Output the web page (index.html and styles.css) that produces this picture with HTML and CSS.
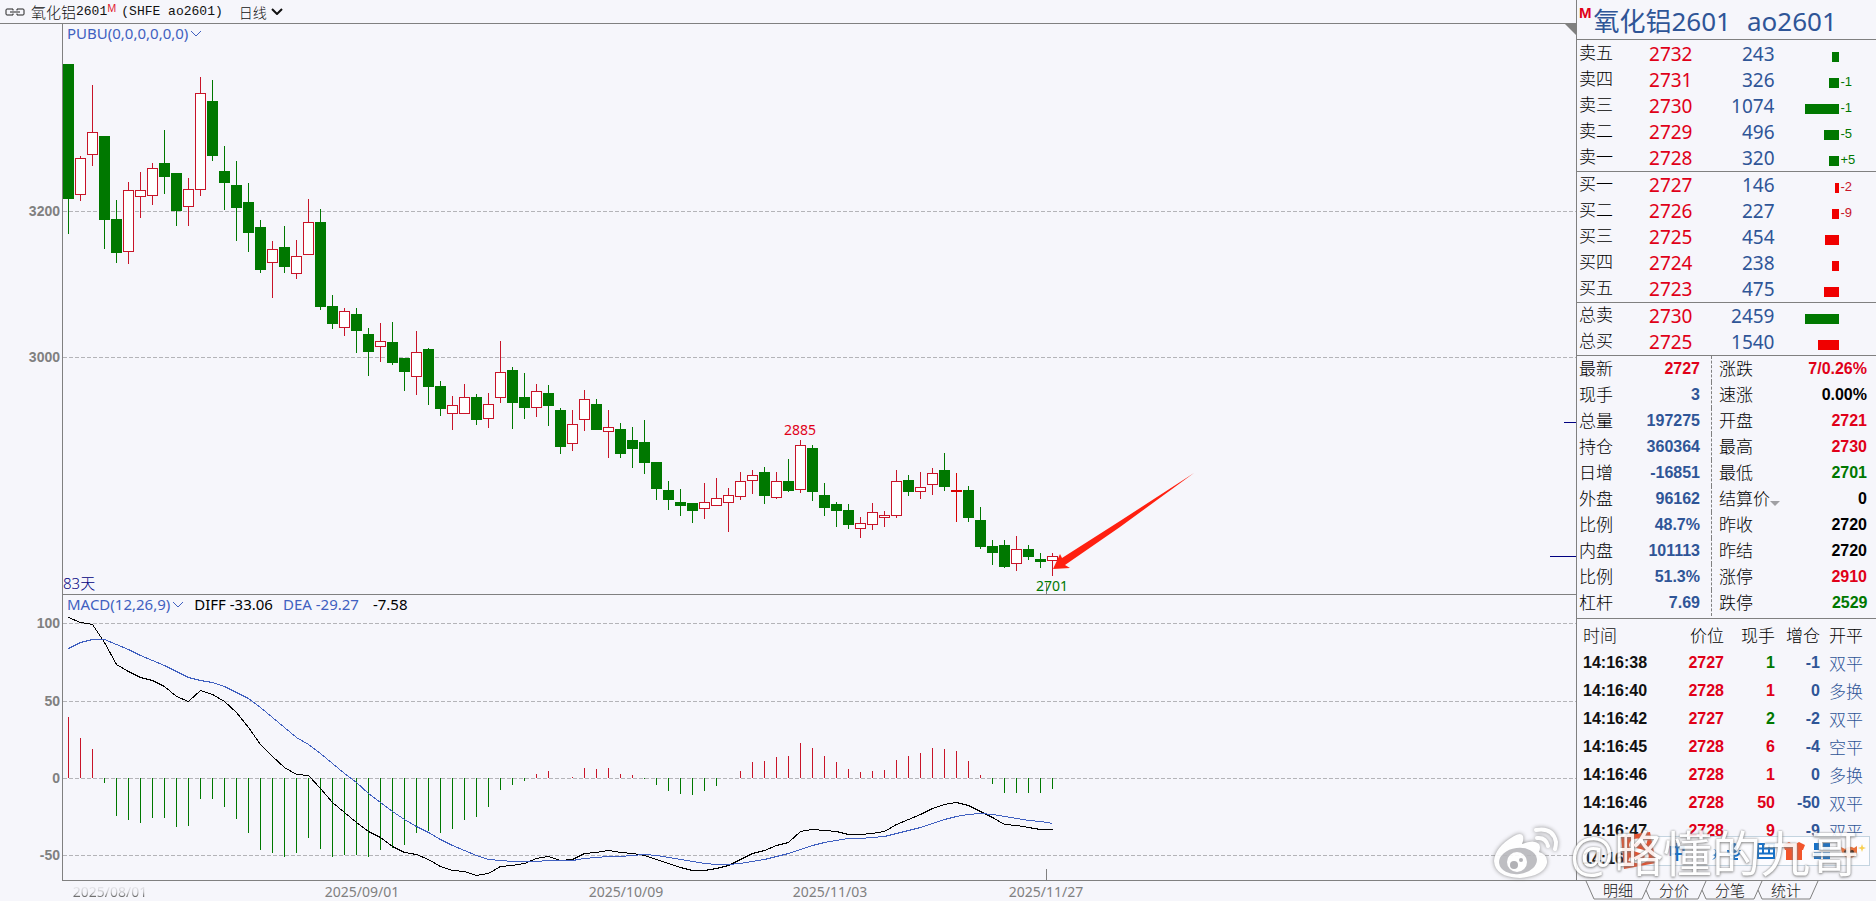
FILE: index.html
```html
<!DOCTYPE html>
<html lang="zh-CN">
<head>
    <meta charset="UTF-8">
    <meta name="viewport" content="width=device-width, initial-scale=1.0">
    <title>氧化铝2601 (SHFE ao2601)</title>
    <link rel="stylesheet" href="styles.css">
</head>
<body>

    <main class="chart-area">
        <!-- Title bar -->
        <header class="chart-header">
            <svg class="link-icon" width="20" height="8" viewBox="0 0 20 8">
                <path d="M8 1H2Q1 1 1 2V6Q1 7 2 7H8V5.500M8 2.500V1M12 2.500V1H18Q19 1 19 2V6Q19 7 18 7H12V5.500M5 4H15" />
            </svg>
            <h1 class="symbol">氧化铝<span class="mono">2601</span><sup>M</sup><span class="mono code">(SHFE ao2601)</span></h1>
            <button class="period" type="button">日线
                <svg class="chevron" width="12" height="7" viewBox="0 0 12 7"><path d="M1 1L6 6L11 1" /></svg>
            </button>
            <span class="corner"></span>
        </header>

        <!-- Candles -->
        <section class="pane price-pane">
            <div class="scale" id="priceScale"></div>
            <div class="plot">
                <svg class="canvas" id="priceChart" viewBox="63 24 1513 570" preserveAspectRatio="none"></svg>
                <div class="legend">
                    <button class="indicator" type="button">PUBU(0,0,0,0,0,0)<svg class="chevron" width="12" height="7" viewBox="0 0 12 7"><path d="M1 1L6 6L11 1" /></svg></button>
                </div>
                <div id="priceTags"></div>
                <span class="days">83天</span>
            </div>
        </section>

        <!-- MACD -->
        <section class="pane macd-pane">
            <div class="scale" id="macdScale"></div>
            <div class="plot">
                <svg class="canvas" id="macdChart" viewBox="63 595 1513 285" preserveAspectRatio="none"></svg>
                <div class="legend">
                    <button class="indicator" type="button">MACD(12,26,9)<svg class="chevron" width="12" height="7" viewBox="0 0 12 7"><path d="M1 1L6 6L11 1" /></svg></button>
                    <span class="diff">DIFF -33.06</span>
                    <span class="dea">DEA -29.27</span>
                    <span class="macd-value">-7.58</span>
                </div>
            </div>
        </section>

        <div class="date-axis" id="dateAxis"></div>
    </main>

    <aside class="quote">
        <h2 class="quote-title"><sup>M</sup><span>氧化铝2601</span><span>ao2601</span></h2>

        <!-- Order book -->
        <table class="book">
            <colgroup><col class="c-name"><col class="c-price"><col class="c-vol"><col class="c-bar"><col></colgroup>
            <tbody id="asks"></tbody>
            <tbody id="bids"></tbody>
            <tbody id="totals"></tbody>
        </table>

        <!-- Statistics -->
        <div class="stats">
            <table class="stat-table">
                <tr><th>最新</th><td class="red">2727</td></tr>
                <tr><th>现手</th><td>3</td></tr>
                <tr><th>总量</th><td>197275</td></tr>
                <tr><th>持仓</th><td>360364</td></tr>
                <tr><th>日增</th><td>-16851</td></tr>
                <tr><th>外盘</th><td>96162</td></tr>
                <tr><th>比例</th><td>48.7%</td></tr>
                <tr><th>内盘</th><td>101113</td></tr>
                <tr><th>比例</th><td>51.3%</td></tr>
                <tr><th>杠杆</th><td>7.69</td></tr>
            </table>
            <table class="stat-table right">
                <tr><th>涨跌</th><td class="red">7/0.26%</td></tr>
                <tr><th>速涨</th><td>0.00%</td></tr>
                <tr><th>开盘</th><td class="red">2721</td></tr>
                <tr><th>最高</th><td class="red">2730</td></tr>
                <tr><th>最低</th><td class="green">2701</td></tr>
                <tr><th><button class="settle" type="button">结算价<span class="caret"></span></button></th><td>0</td></tr>
                <tr><th>昨收</th><td>2720</td></tr>
                <tr><th>昨结</th><td>2720</td></tr>
                <tr><th>涨停</th><td class="red">2910</td></tr>
                <tr><th>跌停</th><td class="green">2529</td></tr>
            </table>
        </div>

        <!-- Trades -->
        <div class="ticks">
            <table class="tick-table">
                <colgroup><col class="t-time"><col class="t-price"><col class="t-qty"><col class="t-inc"><col></colgroup>
                <thead>
                    <tr><th>时间</th><th>价位</th><th>现手</th><th>增仓</th><th>开平</th></tr>
                </thead>
                <tbody>
                    <tr><td>14:16:38</td><td>2727</td><td class="green">1</td><td>-1</td><td>双平</td></tr>
                    <tr><td>14:16:40</td><td>2728</td><td class="red">1</td><td>0</td><td>多换</td></tr>
                    <tr><td>14:16:42</td><td>2727</td><td class="green">2</td><td>-2</td><td>双平</td></tr>
                    <tr><td>14:16:45</td><td>2728</td><td class="red">6</td><td>-4</td><td>空平</td></tr>
                    <tr><td>14:16:46</td><td>2728</td><td class="red">1</td><td>0</td><td>多换</td></tr>
                    <tr><td>14:16:46</td><td>2728</td><td class="red">50</td><td>-50</td><td>双平</td></tr>
                    <tr><td>14:16:47</td><td>2728</td><td class="red">9</td><td>-9</td><td>双平</td></tr>
                    <tr><td>14:16</td><td></td><td></td><td></td><td></td></tr>
                </tbody>
            </table>
        </div>

        <nav class="tabs">
            <button type="button"><svg width="65" height="19" viewBox="0 0 65 19"><path d="M0 0L8 18H56L64 0" /></svg>明细</button>
            <button type="button"><svg width="65" height="19" viewBox="0 0 65 19"><path d="M4 9L8 18H56L64 0" /></svg>分价</button>
            <button type="button"><svg width="65" height="19" viewBox="0 0 65 19"><path d="M4 9L8 18H56L64 0" /></svg>分笔</button>
            <button type="button"><svg width="65" height="19" viewBox="0 0 65 19"><path d="M4 9L8 18H56L64 0" /></svg>统计</button>
        </nav>
    </aside>

    <!-- Input method bar -->
    <div class="ime">
        <svg class="ime-logo" width="40" height="40" viewBox="0 0 40 40">
            <path d="M3 5L32 1L38 32L6 38Z" fill="#e8502c" />
            <path d="M29 11Q14 7 13 14Q13 18 22 20Q31 22 28 28Q23 33 11 28" fill="none" stroke="#fff" stroke-width="4" />
        </svg>
        <span class="ime-lang">中</span>
        <svg width="10" height="20" viewBox="0 0 10 20"><path d="M5 8a3 3 0 1 1-1 6q3 0 3 2l-3 3q6-2 5-8q-1-3-4-3z" fill="#1570c8" /></svg>
        <svg class="ime-mic" width="16" height="20" viewBox="0 0 16 20"><rect x="5" y="2" width="6" height="10" rx="3" fill="#1570c8" /><path d="M2 9q0 6 6 6t6-6M8 15v3M4 18h8" fill="none" stroke="#1570c8" stroke-width="2" /></svg>
        <svg width="18" height="16" viewBox="0 0 18 16"><rect x="1" y="1" width="16" height="14" fill="#fff" stroke="#1570c8" stroke-width="2" /><path d="M1 5.500H17M1 10.500H17M6 1V11M12 1V11" stroke="#1570c8" stroke-width="2" /></svg>
        <svg width="22" height="20" viewBox="0 0 22 20"><path d="M6 1Q11 5 16 1L22 4L20 9H19V19H3V9H2L0 4Z" fill="#f2552c" /></svg>
        <svg width="18" height="18" viewBox="0 0 18 18"><path d="M1 1h7v7h-7zM10 1h7v7h-7zM1 10h7v7h-7zM10 10h7v7h-7z" fill="#1570c8" /></svg>
        <svg width="28" height="20" viewBox="0 0 28 20"><path d="M2 6L6 8Q10 4 15 7L18 5V12Q15 18 9 17Q2 15 2 6Z" fill="#e8703a" /><circle cx="7" cy="11" r="2" fill="#40281c" /><circle cx="13" cy="11" r="2" fill="#40281c" /><path d="M23 3l1 3 3 1-3 1-1 3-1-3-3-1 3-1z" fill="#f8cf52" /></svg>
    </div>

    <!-- Watermark -->
    <div class="watermark">
        <svg width="70" height="56" viewBox="0 0 70 56">
            <path d="M24 11Q31 7 33 11Q34 15 32 19Q44 14 49 19Q51 22 49 27Q58 30 57 38Q54 51 30 53Q5 52 4 36Q5 22 24 11Z" fill="#fff" />
            <ellipse cx="28" cy="36" rx="19" ry="13" fill="#b8b8bc" transform="rotate(-7 28 36)" />
            <circle cx="27" cy="37" r="10" fill="#fff" />
            <circle cx="24" cy="40" r="4" fill="#aaaaae" />
            <circle cx="31" cy="35" r="2" fill="#aaaaae" />
            <path d="M46 5Q63 2 66 17Q66 21 65 24M47 13Q56 12 58 21" fill="none" stroke="#fff" stroke-width="4" stroke-linecap="round" />
        </svg>
        <span>@略懂的九哥</span>
    </div>

    <script src="chart.js"></script>
</body>
</html>
```
FILE: styles.css
```css
/* General Styles */
* {
    box-sizing: border-box;
}

body {
    margin: 0;
    height: 100vh;
    display: flex;
    overflow: hidden;
    position: relative;
    background-color: #f6f6fb;
    color: #111;
    font-family: "Noto Sans", "Noto Sans CJK SC", sans-serif;
    font-size: 15px;
}

h1, h2 {
    margin: 0;
    font-weight: 400;
}

button {
    padding: 0;
    border: none;
    background: none;
    color: inherit;
    font: inherit;
    cursor: pointer;
}

table {
    border-collapse: collapse;
    table-layout: fixed;
    width: 100%;
}

th, td {
    padding: 0;
    font-weight: 400;
    white-space: nowrap;
}

th {
    color: #000;
}

.chevron {
    fill: none;
    stroke: currentColor;
}

/* Chart area */
.chart-area {
    flex: 1;
    min-width: 0;
    display: flex;
    flex-direction: column;
}

.chart-header {
    position: relative;
    flex: none;
    display: flex;
    align-items: center;
    height: 24px;
    padding-left: 5px;
    border-bottom: 1px solid #808080;
}

.link-icon {
    fill: none;
    stroke: #222;
    margin-right: 6px;
}

.symbol {
    display: flex;
    align-items: center;
    font-size: 15px;
    font-weight: 300;
}

.symbol sup {
    align-self: flex-start;
    color: #e02030;
    font-size: 10px;
    font-weight: 400;
    line-height: 14px;
}

.mono {
    font-family: "Liberation Mono", monospace;
    font-size: 13px;
    font-weight: 400;
}

.code {
    margin-left: 5px;
}

.period {
    display: flex;
    align-items: center;
    gap: 4px;
    margin-left: 16px;
    font-size: 14px;
    font-weight: 300;
}

.period .chevron {
    stroke-width: 2;
}

.corner {
    position: absolute;
    right: 0;
    top: 23px;
    width: 12px;
    height: 12px;
    background-color: #808080;
    clip-path: polygon(0 0, 100% 0, 100% 100%);
}

.pane {
    display: flex;
    min-height: 0;
}

.price-pane {
    flex: 571;
}

.macd-pane {
    flex: 286;
}

.scale {
    position: relative;
    flex: none;
    width: 62px;
}

.scale span {
    position: absolute;
    right: 2px;
    color: #808080;
    font-family: "Liberation Sans", sans-serif;
    font-size: 14px;
    font-weight: 700;
    line-height: 16px;
    transform: translateY(-50%);
}

.plot {
    position: relative;
    flex: 1;
    border-left: 1px solid #808080;
    border-bottom: 1px solid #808080;
}

.canvas {
    position: absolute;
    left: 0;
    top: 0;
    width: 100%;
    height: 100%;
}

.legend {
    position: relative;
    display: flex;
    align-items: center;
    gap: 10px;
    height: 18px;
    padding-left: 4px;
    line-height: 18px;
}

.indicator {
    display: flex;
    align-items: center;
    gap: 2px;
}

.indicator, .dea {
    color: #4060c0;
}

.diff, .macd-value {
    color: #000;
}

.macd-value {
    margin-left: 4px;
}

.tag {
    position: absolute;
    font-size: 14px;
    line-height: 16px;
    transform: translate(-50%, -50%);
}

.days {
    position: absolute;
    left: 0;
    bottom: 2px;
    color: #000080;
    line-height: 18px;
    font-weight: 300;
}

.date-axis {
    position: relative;
    flex: none;
    height: 20px;
    margin-left: 63px;
    color: #808080;
    font-size: 14px;
    line-height: 22px;
}

.date-axis span {
    position: absolute;
    transform: translateX(-50%);
}

.date-axis .faded {
    color: transparent;
    background: linear-gradient(#f6f6fb 15%, #c8c8cc 50%, #707070 70%);
    background-clip: text;
}

/* Chart drawing */
.grid {
    stroke: #b4b4b8;
    stroke-dasharray: 4 2;
}

.up {
    stroke: #c81428;
    fill: #fff;
}

.down {
    stroke: #007800;
    fill: #007800;
}

.flat {
    stroke: #d80000;
    fill: #d80000;
}

.bar-up {
    stroke: #c81428;
}

.bar-down {
    stroke: #007800;
}

.line {
    fill: none;
}

.line-diff {
    stroke: #000;
}

.line-dea {
    stroke: #4060c0;
}

.mark {
    stroke: #000080;
}

.cursor {
    stroke: #808080;
}

.arrow {
    fill: #ff2010;
}

/* Quote panel */
.quote {
    flex: none;
    display: flex;
    flex-direction: column;
    width: 300px;
}

.red {
    color: #e00018;
}

.green {
    color: #007800;
}

.quote-title {
    display: flex;
    align-items: center;
    height: 40px;
    border-bottom: 1px solid #808080;
    border-left: 1px solid #808080;
    color: #2f5597;
    font-size: 26px;
    line-height: 30px;
    padding: 2px 0 0 2px;
}

.quote-title sup {
    align-self: flex-start;
    margin-right: 2px;
    padding-top: 2px;
    color: #e00018;
    font-family: "Liberation Sans", sans-serif;
    font-size: 15px;
    font-weight: 700;
    line-height: 18px;
}

.quote-title span + span {
    margin-left: 16px;
}

/* Order book */
.book {
    border-left: 1px solid #808080;
}

.c-name { width: 60px; }
.c-price { width: 56px; }
.c-vol { width: 82px; }
.c-bar { width: 64px; }

.book tbody {
    border-bottom: 1px solid #808080;
}

.book tr {
    height: 26px;
}

.book tbody:first-of-type tr:first-child > * {
    padding-top: 1px;
}

.book th {
    padding-left: 2px;
    font-size: 17px;
    font-weight: 300;
    line-height: 24px;
    text-align: left;
    vertical-align: top;
}

.book td {
    color: #2f5597;
    font-size: 19px;
    line-height: 26px;
    text-align: right;
}

.book .price {
    color: #e00018;
}

.bar {
    display: block;
    height: 10px;
    margin: 6px 0 0 auto;
}

.sell .bar {
    background-color: #007800;
}

.buy .bar {
    background-color: #f00000;
}

.book .change {
    padding: 4px 0 0 2px;
    font-family: "Liberation Sans", sans-serif;
    font-size: 13px;
    line-height: 20px;
    text-align: left;
}

.sell .change {
    color: #007800;
}

.buy .change {
    color: #c81428;
}

/* Statistics */
.stats {
    display: grid;
    grid-template-columns: 134px 1fr;
    padding-bottom: 2px;
    border-left: 1px solid #808080;
    border-bottom: 1px solid #808080;
}

.stat-table tr {
    height: 26px;
}

.stat-table th {
    padding-left: 2px;
    font-size: 17px;
    font-weight: 300;
    line-height: 26px;
    text-align: left;
}

.stat-table td {
    padding-right: 11px;
    color: #2f5597;
    font-family: "Liberation Sans", sans-serif;
    font-size: 16px;
    font-weight: 700;
    text-align: right;
}

.right {
    border-left: 1px dashed #808080;
}

.right th {
    padding-left: 7px;
}

.right td {
    padding-right: 8px;
    color: #000;
}

.stat-table .red, .tick-table .red {
    color: #e00018;
}

.stat-table .green, .tick-table .green {
    color: #007800;
}

.settle {
    display: flex;
    align-items: center;
}

.caret {
    margin-top: 8px;
    border: 5px solid transparent;
    border-top-color: #a0a0a4;
    border-bottom: none;
}

/* Trades */
.ticks {
    flex: 1;
    min-height: 0;
    overflow: hidden;
    border-left: 1px solid #808080;
}

.t-time { width: 86px; }
.t-price { width: 61px; }
.t-qty { width: 51px; }
.t-inc { width: 45px; }

.tick-table tr {
    height: 28px;
}

.tick-table thead tr {
    height: 30px;
}

.tick-table th {
    font-size: 17px;
    font-weight: 300;
    text-align: right;
}

.tick-table td {
    color: #2f5597;
    font-family: "Liberation Sans", sans-serif;
    font-size: 16px;
    font-weight: 700;
    line-height: 20px;
    text-align: right;
}

.tick-table th:first-child, .tick-table td:first-child {
    padding-left: 6px;
    color: #111;
    text-align: left;
}

.tick-table td:nth-child(2) {
    color: #e00018;
}

.tick-table th:last-child, .tick-table td:last-child {
    padding-left: 9px;
    font-family: "Noto Sans CJK SC", sans-serif;
    font-size: 17px;
    font-weight: 300;
    text-align: left;
}

/* Tabs */
.tabs {
    flex: none;
    display: flex;
    height: 21px;
    padding-left: 10px;
    border-top: 1px solid #808080;
}

.tabs button {
    position: relative;
    width: 56px;
    height: 17px;
    padding-left: 8px;
    font-size: 15px;
    font-weight: 300;
    line-height: 16px;
}

.tabs svg {
    position: absolute;
    left: 0;
    top: 0;
    fill: none;
    stroke: #808080;
    overflow: visible;
}

/* Input method bar */
.ime {
    position: absolute;
    right: 6px;
    bottom: 35px;
    display: flex;
    align-items: center;
    gap: 8px;
    height: 30px;
    padding-right: 2px;
    border: 1px solid #c4d4e0;
    background-color: #fcfcff;
}

.ime-logo {
    margin-left: -10px;
}

.ime-lang {
    margin: 0 14px 0 2px;
    color: #1570c8;
    font-size: 18px;
    font-weight: 700;
}

.ime-mic {
    margin-right: 7px;
}

/* Watermark */
.watermark {
    position: absolute;
    right: 17px;
    bottom: 20px;
    display: flex;
    align-items: center;
    gap: 10px;
    color: #fff;
    font-size: 49px;
    line-height: 56px;
    opacity: 0.9;
    text-shadow: 0 0 2px #808080, 0 1px 3px #808080;
    pointer-events: none;
}

.watermark svg {
    filter: drop-shadow(0 0 2px #808080);
}
```
FILE: chart.js
```javascript
const X0 = 68.5;
const STEP = 12;
const RIGHT = 1576;

// direction, wick top, body top, body bottom, wick bottom
const candles = [
    ['down', 64, 64, 199, 234], ['up', 156, 158, 195, 201], ['up', 85, 132, 155, 166], ['down', 136, 136, 220, 249],
    ['down', 200, 219, 253, 263], ['up', 182, 190, 252, 264], ['up', 172, 190, 197, 218], ['up', 163, 168, 196, 205],
    ['down', 130, 163, 177, 194], ['down', 173, 173, 211, 226], ['up', 178, 189, 207, 226], ['up', 77, 93, 190, 196],
    ['down', 80, 101, 156, 161], ['down', 146, 171, 183, 210], ['down', 161, 185, 208, 241], ['down', 183, 202, 233, 252],
    ['down', 220, 227, 270, 273], ['up', 241, 249, 263, 298], ['down', 226, 247, 267, 273], ['up', 240, 256, 274, 279],
    ['up', 199, 222, 255, 255], ['down', 209, 222, 307, 310], ['down', 295, 306, 324, 329], ['up', 308, 311, 328, 336],
    ['down', 308, 314, 331, 353], ['down', 328, 334, 352, 376], ['up', 323, 341, 347, 362], ['down', 322, 342, 363, 365],
    ['down', 358, 358, 372, 391], ['up', 331, 352, 377, 395], ['down', 348, 349, 387, 405], ['down', 381, 386, 409, 416],
    ['up', 396, 405, 414, 430], ['up', 384, 397, 414, 414], ['down', 394, 397, 420, 425], ['up', 393, 404, 419, 428],
    ['up', 341, 372, 398, 403], ['down', 367, 370, 403, 429], ['down', 373, 397, 408, 419], ['up', 384, 391, 408, 417],
    ['down', 385, 393, 406, 426], ['down', 408, 410, 447, 454], ['up', 410, 424, 444, 451], ['up', 390, 399, 420, 431],
    ['down', 399, 404, 430, 430], ['up', 410, 427, 432, 458], ['down', 423, 429, 454, 458], ['down', 427, 440, 449, 468],
    ['down', 420, 442, 463, 474], ['down', 462, 462, 489, 500], ['down', 481, 490, 500, 510], ['down', 489, 502, 506, 516],
    ['down', 503, 503, 511, 523], ['up', 483, 502, 509, 519], ['up', 478, 498, 506, 506], ['up', 488, 495, 503, 532],
    ['up', 472, 481, 497, 500], ['up', 470, 475, 481, 494], ['down', 467, 472, 496, 504], ['up', 472, 481, 498, 499],
    ['down', 459, 481, 491, 492], ['up', 440, 445, 490, 493], ['down', 445, 448, 492, 501], ['down', 483, 495, 508, 516],
    ['down', 502, 504, 511, 527], ['down', 504, 510, 525, 529], ['up', 517, 523, 529, 538], ['up', 503, 512, 525, 530],
    ['up', 511, 515, 518, 527], ['up', 470, 481, 516, 518], ['down', 475, 480, 492, 496], ['up', 472, 487, 492, 499],
    ['up', 468, 473, 485, 495], ['down', 453, 470, 487, 491], ['flat', 473, 490, 492, 522], ['down', 486, 490, 518, 522],
    ['down', 507, 520, 547, 549], ['down', 540, 546, 553, 565], ['down', 540, 545, 567, 568], ['up', 536, 549, 564, 571],
    ['down', 545, 549, 557, 560], ['down', 553, 559, 562, 568], ['up', 553, 556, 561, 576]
];

const ZERO = 778;
const bars = [
    717, 738, 749, 783, 816, 820, 823, 818, 818, 827, 826, 799, 799, 807, 819, 833, 850, 853, 857, 853, 838,
    849, 857, 855, 855, 857, 850, 848, 845, 833, 831, 833, 829, 820, 817, 807, 790, 785, 781, 774, 771,
    778, 777, 768, 769, 768, 774, 775, 779, 785, 791, 794, 795, 791, 786, 778, 771, 762, 761, 757, 756,
    743, 748, 756, 762, 769, 772, 771, 770, 760, 756, 753, 748, 749, 751, 761, 775, 784, 793, 793, 793, 793, 789
];

const diff = [
    617, 622, 624, 642, 664, 671, 677, 680, 686, 696, 701, 690, 694, 701, 712, 727, 744, 756, 767, 774, 775,
    788, 802, 812, 822, 831, 837, 846, 852, 854, 859, 866, 870, 871, 875, 873, 866, 865, 863, 858, 856,
    860, 859, 853, 852, 850, 852, 853, 855, 859, 863, 867, 870, 870, 868, 865, 859, 853, 850, 845, 842,
    831, 829, 830, 831, 834, 834, 833, 831, 824, 819, 814, 808, 804, 802, 805, 811, 817, 824, 825, 827, 829, 829
];

const dea = [
    648, 642, 639, 639, 644, 649, 655, 660, 665, 671, 677, 680, 682, 686, 692, 698, 707, 717, 727, 737, 744,
    753, 763, 773, 782, 793, 802, 811, 819, 826, 832, 839, 845, 850, 855, 859, 860, 861, 861, 861, 860,
    860, 860, 858, 857, 856, 856, 855, 854, 855, 857, 859, 861, 863, 864, 864, 863, 861, 859, 856, 853,
    849, 845, 842, 840, 838, 838, 837, 836, 833, 830, 827, 823, 819, 816, 814, 813, 814, 816, 818, 820, 821, 823
];

function line(x1, y1, x2, y2, cls) {
    return `<line class="${cls}" x1="${x1}" y1="${y1}" x2="${x2}" y2="${y2}" shape-rendering="crispEdges" />`;
}

function polyline(values, cls) {
    const points = values.map((y, i) => `${X0 + i * STEP},${y + 0.5}`).join(' ');
    return `<polyline class="line ${cls}" points="${points}" shape-rendering="crispEdges" />`;
}

function drawPrice() {
    let out = line(63, 211.5, RIGHT, 211.5, 'grid') + line(63, 357.5, RIGHT, 357.5, 'grid');

    candles.forEach(([dir, high, top, bottom, low], i) => {
        const x = X0 + i * STEP;
        out += line(x, high, x, low, dir);
        out += `<rect class="${dir}" x="${x - 5}" y="${top + 0.5}" width="10" height="${bottom - top - 1}" shape-rendering="crispEdges" />`;
    });

    // Last price marks and the cursor tick
    out += line(1564, 422.5, RIGHT, 422.5, 'mark') + line(1550, 556.5, RIGHT, 556.5, 'mark');
    out += line(1046.5, 583, 1046.5, 594, 'cursor');
    out += '<path class="arrow" d="M1053 569L1060 554L1062 558L1120 521L1194 473L1120 527L1065 565L1070 568Z" />';
    document.getElementById('priceChart').innerHTML = out;
}

function drawMacd() {
    let out = '';
    [623.5, 701.5, 778.5, 855.5].forEach(y => {
        out += line(63, y, RIGHT, y, 'grid');
    });
    bars.forEach((y, i) => {
        const x = X0 + i * STEP;
        out += line(x, ZERO, x, y, y < ZERO ? 'bar-up' : 'bar-down');
    });
    out += polyline(diff, 'line-diff') + polyline(dea, 'line-dea');
    out += line(1046.5, 869, 1046.5, 880, 'cursor');
    document.getElementById('macdChart').innerHTML = out;
}

function drawLabels() {
    const scale = (id, items, top, height) => {
        document.getElementById(id).innerHTML = items
            .map(([text, y]) => `<span style="top: ${(y - top) / height * 100}%">${text}</span>`).join('');
    };
    scale('priceScale', [['3200', 211], ['3000', 357]], 24, 571);
    scale('macdScale', [['100', 623], ['50', 701], ['0', 778], ['-50', 855]], 595, 286);

    document.getElementById('priceTags').innerHTML = [['2885', 800, 430, 'red'], ['2701', 1052, 586, 'green']]
        .map(([text, x, y, cls]) => `<span class="tag ${cls}" style="left: ${(x - 63) / 1513 * 100}%; top: ${(y - 24) / 570 * 100}%">${text}</span>`).join('');

    document.getElementById('dateAxis').innerHTML = [['2025/08/01', 110, 'faded'], ['2025/09/01', 362, ''], ['2025/10/09', 626, ''], ['2025/11/03', 830, ''], ['2025/11/27', 1046, '']]
        .map(([text, x, cls]) => `<span class="${cls}" style="left: ${(x - 63) / 1513 * 100}%">${text}</span>`).join('');
}

// Order book row: name, price, volume, bar width, change
function bookRows(id, side, rows) {
    document.getElementById(id).innerHTML = rows.map(([name, price, vol, bar, change]) => `
        <tr class="${side || (name === '总卖' ? 'sell' : 'buy')}">
            <th>${name}</th><td class="price">${price}</td><td>${vol}</td>
            <td><span class="bar" style="width: ${bar}px"></span></td><td class="change">${change}</td>
        </tr>`).join('');
}

drawPrice();
drawMacd();
drawLabels();

bookRows('asks', 'sell', [
    ['卖五', 2732, 243, 7, ''], ['卖四', 2731, 326, 10, '-1'], ['卖三', 2730, 1074, 34, '-1'],
    ['卖二', 2729, 496, 15, '-5'], ['卖一', 2728, 320, 10, '+5']
]);
bookRows('bids', 'buy', [
    ['买一', 2727, 146, 4, '-2'], ['买二', 2726, 227, 7, '-9'], ['买三', 2725, 454, 14, ''],
    ['买四', 2724, 238, 7, ''], ['买五', 2723, 475, 15, '']
]);
bookRows('totals', '', [['总卖', 2730, 2459, 34, ''], ['总买', 2725, 1540, 21, '']]);
```
